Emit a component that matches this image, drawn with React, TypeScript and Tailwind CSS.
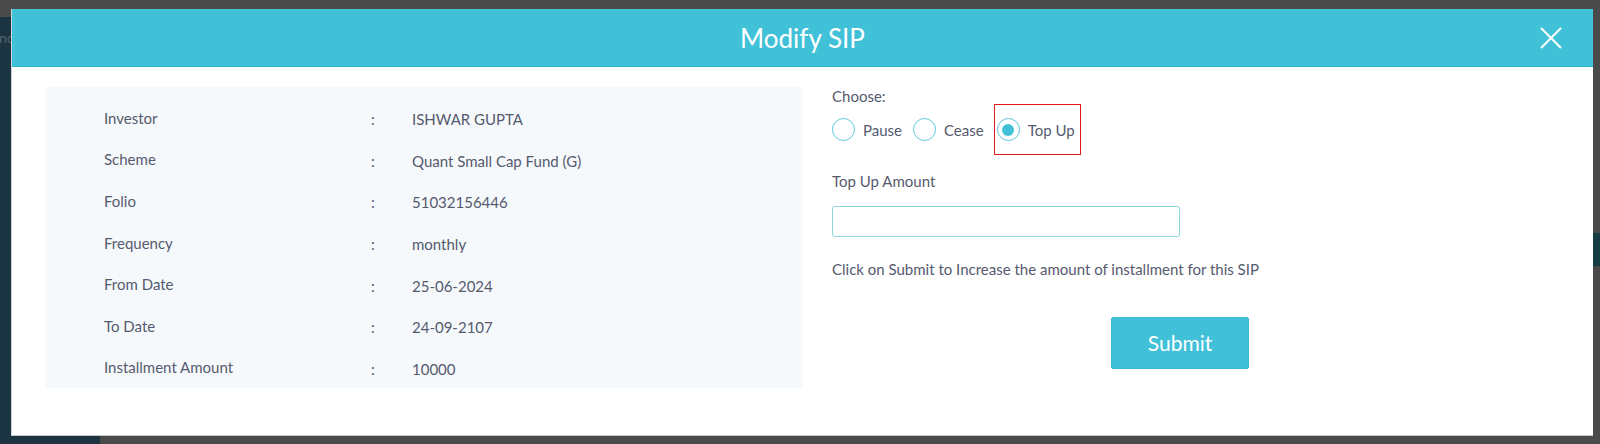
import { useState } from "react";

const details: [string, string][] = [
  ["Investor", "ISHWAR GUPTA"],
  ["Scheme", "Quant Small Cap Fund (G)"],
  ["Folio", "51032156446"],
  ["Frequency", "monthly"],
  ["From Date", "25-06-2024"],
  ["To Date", "24-09-2107"],
  ["Installment Amount", "10000"],
];

const options = ["Pause", "Cease", "Top Up"];

const Radio = ({ checked }: { checked: boolean }) => (
  <span className="w-[23px] h-[23px] rounded-full border-[1.5px] border-[#5cc9da] bg-white flex items-center justify-center shrink-0">
    {checked && <span className="w-[12px] h-[12px] rounded-full bg-[#41c1d8]" />}
  </span>
);

const App = () => {
  const [choice, setChoice] = useState("Top Up");
  const [amount, setAmount] = useState("");

  return (
    <div
      className="relative w-[1600px] h-[444px] bg-[#4a4a4a] overflow-hidden"
      style={{ fontFamily: "Lato, 'Open Sans', sans-serif" }}
    >
      {/* page behind the overlay */}
      <div className="absolute left-0 top-[17px] w-[11px] h-[427px] bg-[#1c3441] overflow-hidden">
        <span className="absolute left-[-1px] top-[11px] text-[14px] text-[#56626b] leading-[20px] whitespace-nowrap">
          nc
        </span>
      </div>
      <div className="absolute left-0 top-[435px] w-[100px] h-[9px] bg-[#1c3441]" />
      <div className="absolute right-0 top-[233px] w-[7px] h-[33px] bg-[#163c44]" />

      {/* modal */}
      <div className="absolute left-[11px] top-[9px] w-[1582px] h-[427px] bg-white border-l border-[#cfd6da] border-b border-b-[#c8c8c8] flex flex-col">
        <div className="relative h-[58px] bg-[#41c1d8] border-b border-[#2fb3ca] flex items-center justify-center shrink-0">
          <h2 className="text-[26px] text-white leading-none">Modify SIP</h2>
          <button className="absolute right-[31px] top-[18px] w-[22px] h-[22px]">
            <svg viewBox="0 0 22 22" className="w-[22px] h-[22px]" fill="none" stroke="white" strokeWidth="2">
              <path d="M1 1 L21 21 M21 1 L1 21" />
            </svg>
          </button>
        </div>

        <div className="flex pl-[34px] pt-[20px]">
          <div className="w-[756px] h-[301px] bg-[#f5f9fc] pt-[10px] pl-[58px] text-[15px] text-[#555a6e]">
            {details.map(([label, value]) => (
              <div key={label} className="flex items-center h-[41.6px]">
                <span className="w-[267px] leading-[20px]">{label}</span>
                <span className="w-[41px] leading-[20px] pt-[3px]">:</span>
                <span className="leading-[20px] pt-[3px]">{value}</span>
              </div>
            ))}
          </div>

          <div className="ml-[30px] -mt-[1px] text-[15px] text-[#555a6e] flex flex-col">
            <div className="leading-[20px]">Choose:</div>
            <div className="flex items-center h-[51px] -mt-[2px]">
              {options.map((opt) => {
                const active = opt === choice;
                return (
                  <label
                    key={opt}
                    onClick={() => setChoice(opt)}
                    className={
                      opt === "Top Up"
                        ? "flex items-center gap-[8px] h-[51px] pl-[2px] pr-[5px] ml-[10px] border-[1.5px] border-[#e5191c] cursor-pointer"
                        : opt === "Cease"
                        ? "flex items-center gap-[8px] ml-[11px] cursor-pointer"
                        : "flex items-center gap-[8px] cursor-pointer"
                    }
                  >
                    <Radio checked={active} />
                    <span className="leading-[20px]">{opt}</span>
                  </label>
                );
              })}
            </div>
            <div className="leading-[20px] mt-[16px]">Top Up Amount</div>
            <input
              value={amount}
              onChange={(e) => setAmount(e.target.value)}
              className="mt-[15px] w-[348px] h-[31px] border border-[#8dd6e0] rounded-[3px] px-2 outline-none"
            />
            <div className="leading-[20px] mt-[22px]">
              Click on Submit to Increase the amount of installment for this SIP
            </div>
            <button className="mt-[38px] ml-[279px] w-[138px] h-[52px] bg-[#41c1d8] border border-[#3ab8cf] rounded-[2px] text-white text-[21px]">
              Submit
            </button>
          </div>
        </div>
      </div>
    </div>
  );
};

export default App;
